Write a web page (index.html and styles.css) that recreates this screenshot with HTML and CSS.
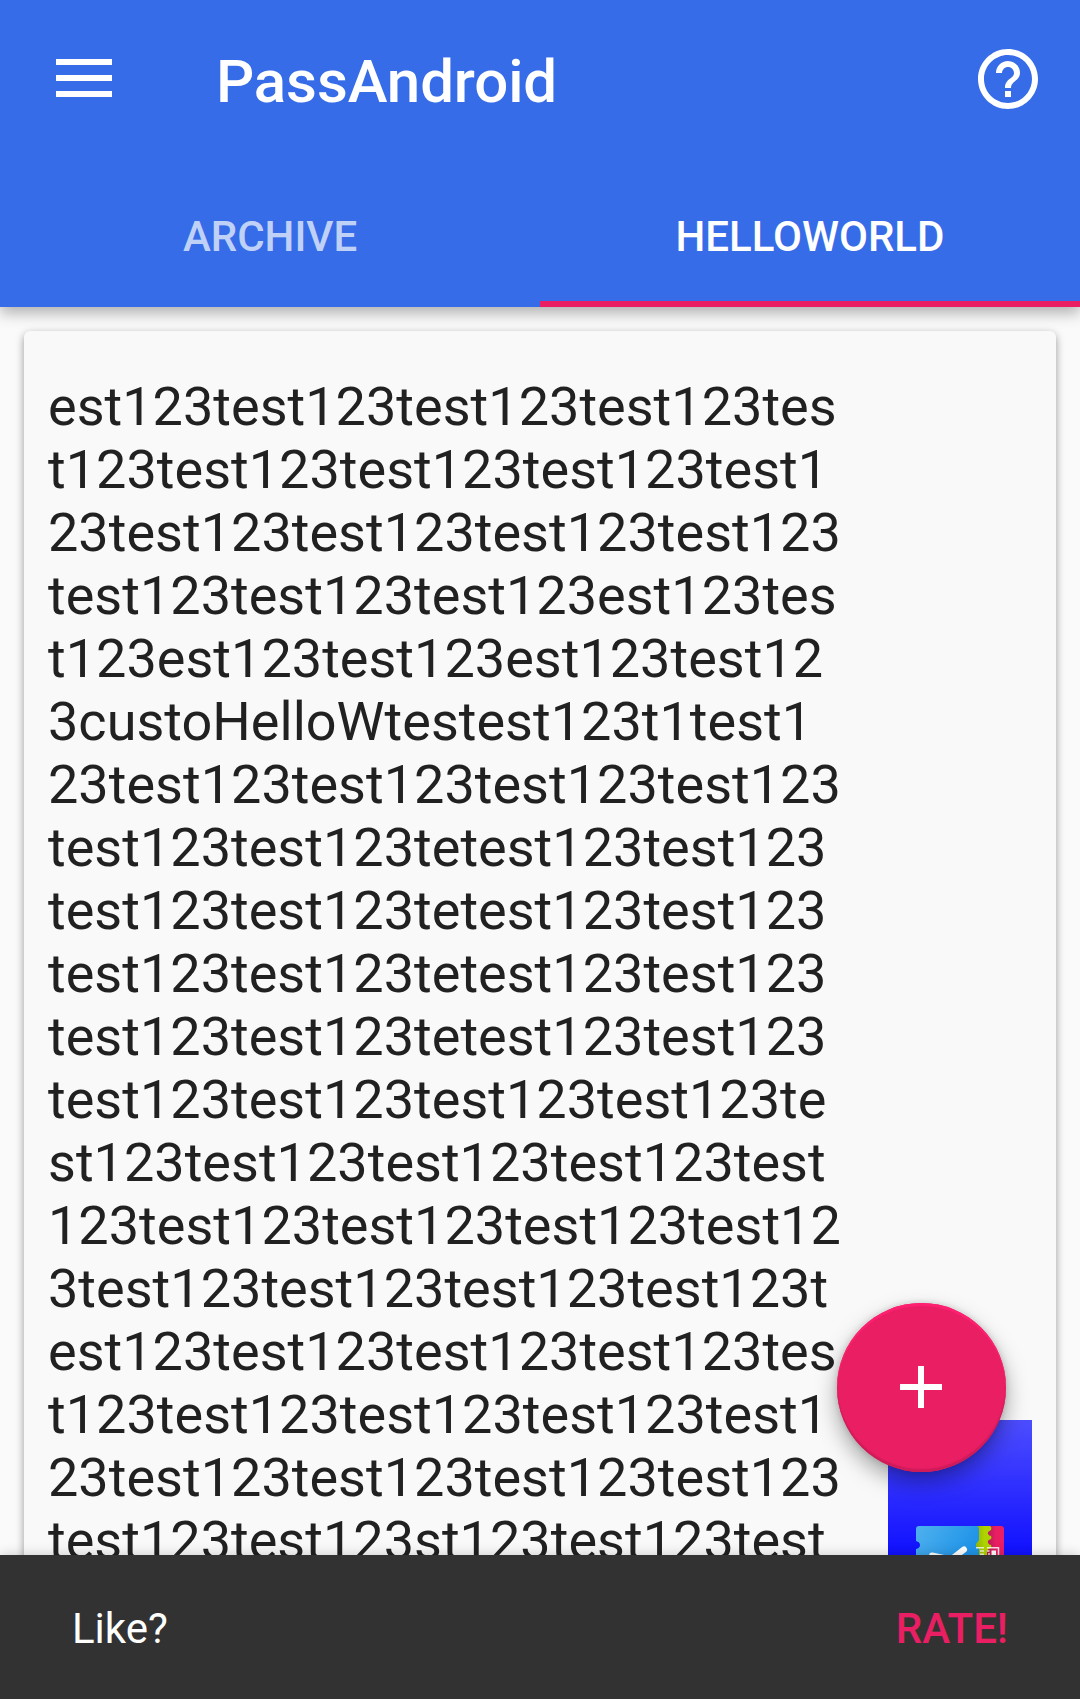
FILE: index.html
```html
<!DOCTYPE html>
<html lang="en">
<head>
<meta charset="utf-8">
<title>PassAndroid</title>
<link rel="stylesheet" href="styles.css">
</head>
<body>
<div class="app">
  <header class="appbar">
    <div class="toolbar">
      <svg class="icon" viewBox="0 0 72 72"><path d="M8 16h56v6H8zM8 32h56v6H8zM8 48h56v6H8z"/></svg>
      <h1 class="title">PassAndroid</h1>
      <svg class="icon" viewBox="0 0 24 24"><path d="M11 18h2v-2h-2v2zm1-16C6.480 2 2 6.480 2 12s4.480 10 10 10 10-4.480 10-10S17.520 2 12 2zm0 18c-4.410 0-8-3.590-8-8s3.590-8 8-8 8 3.590 8 8-3.590 8-8 8zm0-14c-2.210 0-4 1.790-4 4h2c0-1.100.9-2 2-2s2 .9 2 2c0 2-3 1.750-3 5h2c0-2.250 3-2.500 3-5 0-2.210-1.790-4-4-4z"/></svg>
    </div>
    <nav class="tabs">
      <a class="tab">ARCHIVE</a>
      <a class="tab tab-active">HELLOWORLD</a>
    </nav>
  </header>
  <main class="content">
    <article class="card">
      <p class="pass-text">est123test123test123test123tes<br>t123test123test123test123test1<br>23test123test123test123test123<br>test123test123test123est123tes<br>t123est123test123est123test12<br>3custoHelloWtestest123t1test1<br>23test123test123test123test123<br>test123test123tetest123test123<br>test123test123tetest123test123<br>test123test123tetest123test123<br>test123test123tetest123test123<br>test123test123test123test123te<br>st123test123test123test123test<br>123test123test123test123test12<br>3test123test123test123test123t<br>est123test123test123test123tes<br>t123test123test123test123test1<br>23test123test123test123test123<br>test123test123st123test123test</p>
      <div class="pass-icon">
        <svg class="ticket" viewBox="0 0 88 30">
          <defs>
            <linearGradient id="blue" x1="0" y1="0" x2="1" y2="0.3"><stop offset="0" stop-color="#4fb1ee"/><stop offset="1" stop-color="#2094e8"/></linearGradient>
            <linearGradient id="green" x1="0" y1="0" x2="1" y2="0"><stop offset=".2" stop-color="#9aba00"/><stop offset=".6" stop-color="#aed400"/></linearGradient>
            <linearGradient id="pink" x1="0" y1="0" x2="1" y2="0"><stop offset=".2" stop-color="#b81c58"/><stop offset=".6" stop-color="#e91e63"/></linearGradient>
          </defs>
          <path fill="url(#pink)" d="M68 0h17q3 0 3 3v27H68z"/>
          <path fill="url(#green)" d="M58 0h16q2 1 1 4q-4 2-3 4q1 2 3 2q1 2 0 3q-4 1-3 4q1 2 3 2q1 2 0 3q-4 1-4 4v4H58z"/>
          <path fill="url(#blue)" d="M3 0h57q3 0 3 3v11l-3 4v2l3 3v7H0v-7q4-1 4-4t-4-4V3q0-3 3-3z"/>
          <path fill="none" stroke="#fff" stroke-width="6" stroke-linecap="round" stroke-linejoin="round" d="M16 29.500l19 4 13-10"/>
          <path fill="none" stroke="#fff" stroke-width="1.600" d="M60 21.800h8M64 25h4M64 28.200h4" opacity=".8"/>
          <path fill="none" stroke="#fff" stroke-width="1.500" d="M71 21.700h11.500V30M71 25h2.500M72 28h2" opacity=".85"/>
          <path fill="#fff" d="M75.500 24.500h4.500v4.500h-4.500z"/>
        </svg>
      </div>
    </article>
  </main>
  <button class="fab" aria-label="Add"><svg viewBox="0 0 42 42"><path d="M18 0h6v18h18v6H24v18h-6V24H0v-6h18z"/></svg></button>
  <footer class="snackbar"><span>Like?</span><a class="action">RATE!</a></footer>
</div>
</body>
</html>
```
FILE: styles.css
```css
* { box-sizing: border-box; }
body { margin: 0; font-family: Roboto, sans-serif; background: #fafafa; }
.app { position: relative; display: flex; flex-direction: column; height: 1699px; overflow: hidden; }
.appbar { position: relative; z-index: 1; flex: none; height: 307px; background: #366ce7; color: #fff; box-shadow: 0 6px 14px rgba(0,0,0,.3); }
.toolbar { display: flex; align-items: center; height: 163px; padding: 0 36px 5px 48px; }
.icon { width: 72px; height: 72px; fill: #fff; }
.title { flex: 1; margin: 5px 0 0 96px; font-size: 60px; font-weight: 500; line-height: 70px; letter-spacing: -0.1px; }
.tabs { display: flex; height: 144px; }
.tab { flex: 1; display: flex; align-items: center; justify-content: center; padding-top: 8px; border-bottom: 6px solid transparent; font-size: 42px; font-weight: 500; color: rgba(255,255,255,.7); }
.tab-active { color: #fff; border-bottom-color: #e91e63; }
.content { flex: 1; min-height: 0; padding: 24px; }
.card { display: flex; align-items: flex-start; justify-content: space-between; height: 1500px; padding: 44px 24px 24px; border-radius: 6px; background: #f9f9f9; box-shadow: 0 3px 8px rgba(0,0,0,.4); }
.pass-text { margin: 0; font-size: 54px; line-height: 63px; letter-spacing: 0.02px; color: #212121; white-space: nowrap; }
.pass-icon { display: flex; justify-content: center; flex: none; width: 144px; height: 144px; margin-top: 1045px; padding-top: 106px; background: linear-gradient(#4d4dff, #1010ff 135px); }
.ticket { width: 88px; height: 30px; }
.fab { position: absolute; left: 836.5px; top: 1302.5px; display: flex; align-items: center; justify-content: center; width: 169px; height: 169px; padding: 0; border: 0; border-radius: 50%; background: #e91e63; box-shadow: 0 10px 22px rgba(0,0,0,.35), 0 0 6px rgba(0,0,0,.15), inset 0 3px 1px #ff2070, inset 0 -3px 1px #cf1b5a; }
.fab svg { width: 42px; height: 42px; fill: #fff; }
.snackbar { position: relative; flex: none; display: flex; align-items: center; justify-content: space-between; height: 144px; padding: 2px 72px 0; background: #323232; color: #fff; font-size: 42px; box-shadow: 0 0 12px rgba(0,0,0,.2); }
.action { color: #e91e63; font-weight: 500; }
```
